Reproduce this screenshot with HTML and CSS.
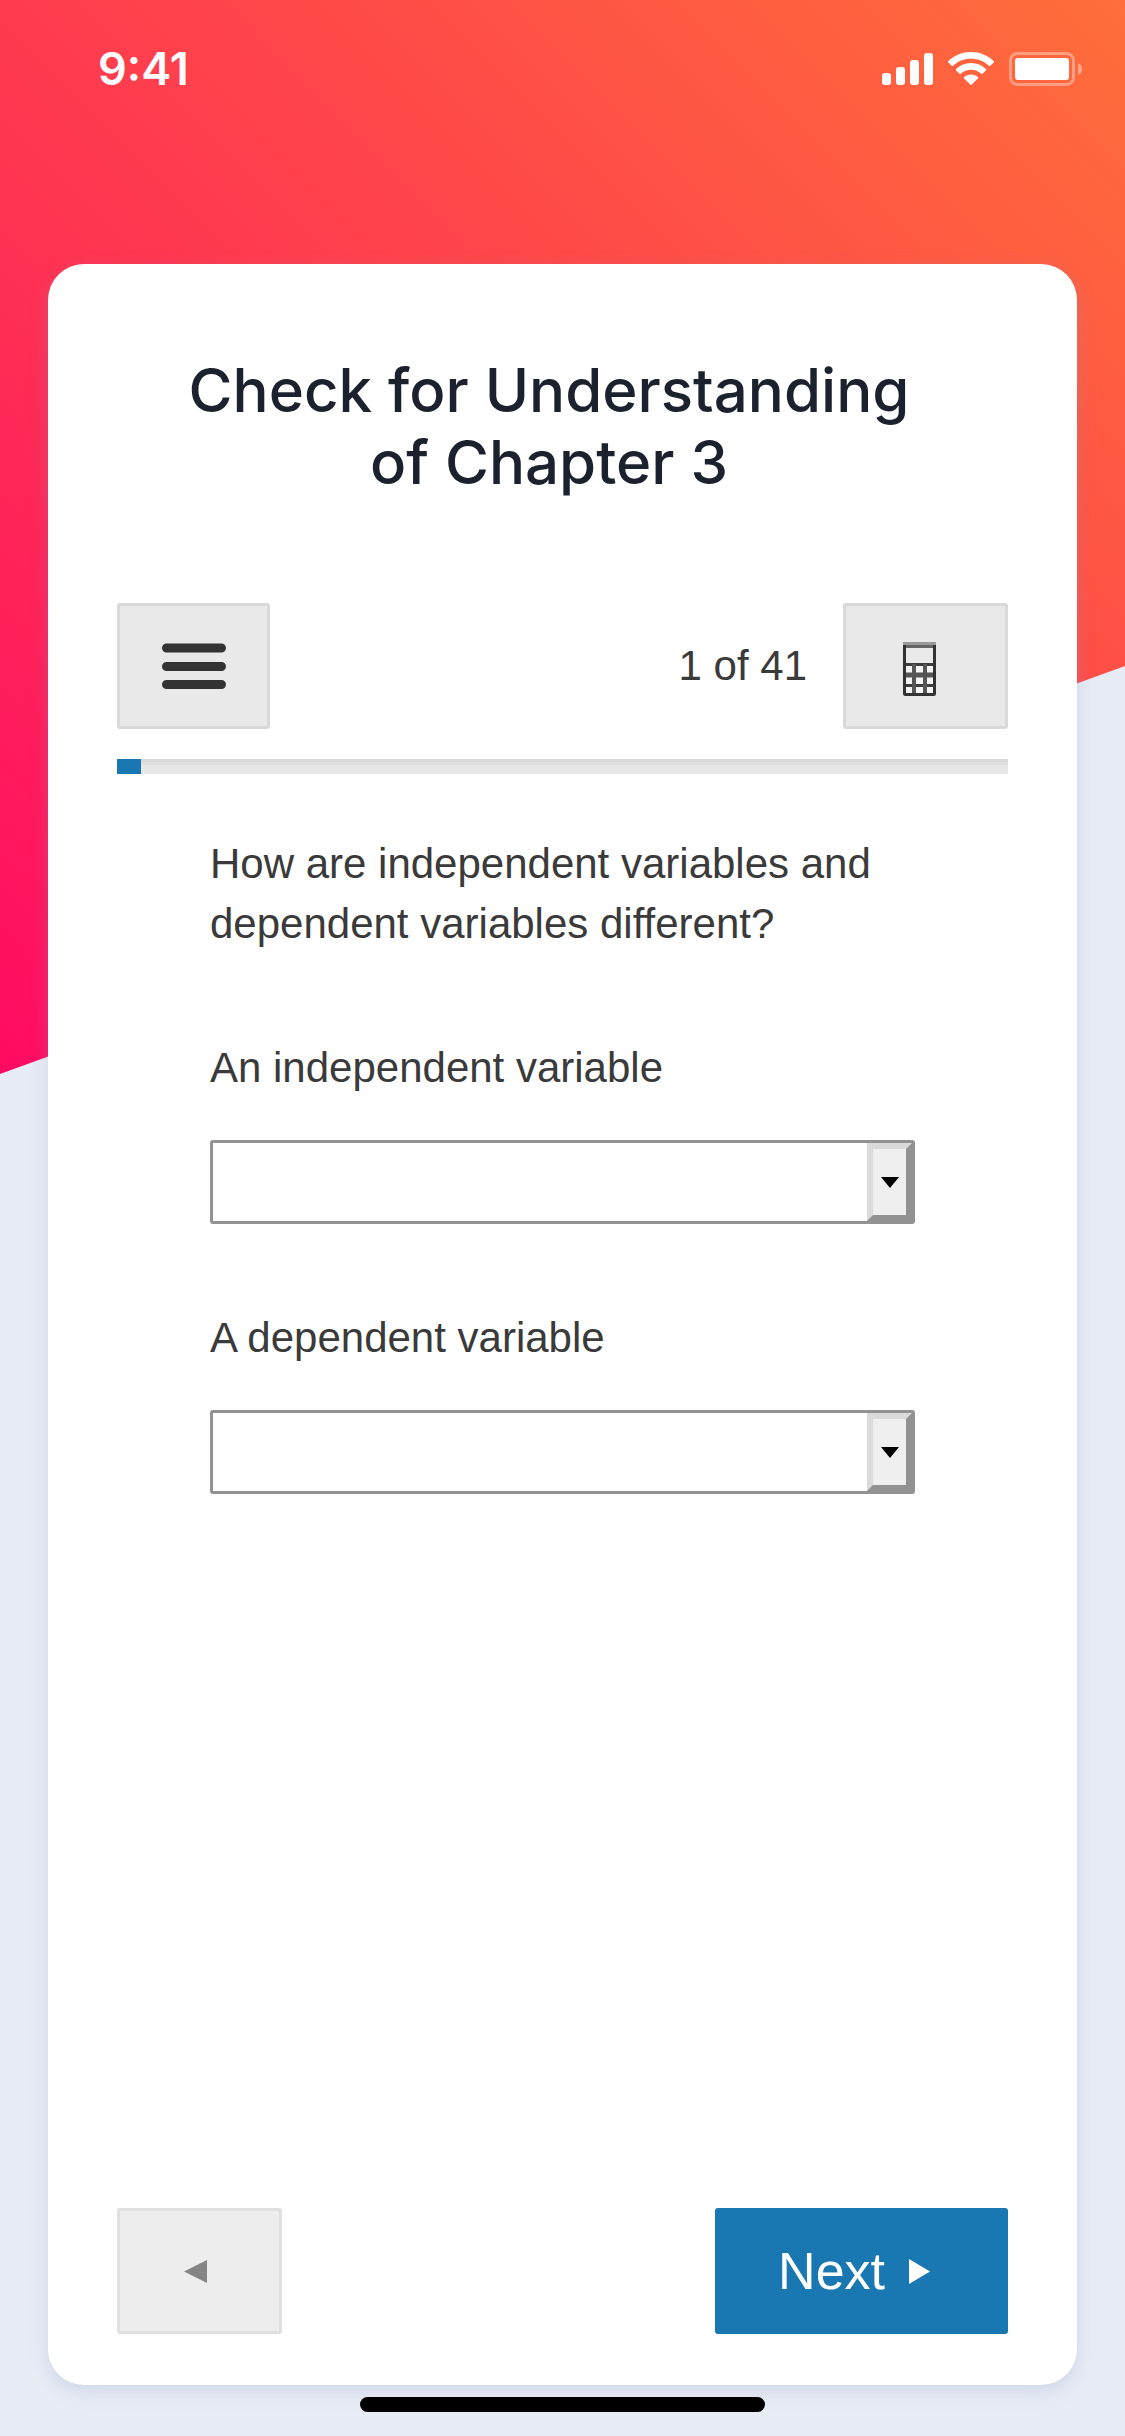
FILE: index.html
```html
<!DOCTYPE html>
<html lang="en">
<head>
    <meta charset="UTF-8">
    <meta name="viewport" content="width=device-width, initial-scale=1.0">
    <title>Check for Understanding</title>
    <link rel="stylesheet" href="styles.css">
</head>
<body>
    <header class="status-bar">
        <span class="time">9:41</span>
        <div class="status-icons">
            <svg width="51" height="34" viewBox="0 0 51 34" fill="#fff">
                <rect x="0" y="21" width="9" height="12" rx="3"/>
                <rect x="14" y="15" width="9" height="18" rx="3"/>
                <rect x="28" y="8" width="9" height="25" rx="3"/>
                <rect x="42" y="1" width="9" height="32" rx="3"/>
            </svg>
            <svg width="46" height="34" viewBox="0 0 46 34" fill="#fff">
                <path d="M23 0C31.800 0 39.800 3.400 45.700 9Q46.300 9.700 45.700 10.400L42.300 13.800Q41.600 14.400 40.900 13.800C36.200 9.400 29.900 6.800 23 6.800S9.800 9.400 5.100 13.800Q4.400 14.400 3.700 13.800L.3 10.400Q-.3 9.700 .3 9C6.200 3.400 14.200 0 23 0Z"/>
                <path d="M23 11C28.800 11 34 13.200 38 16.900Q38.600 17.600 38 18.300L34.500 21.700Q33.900 22.300 33.200 21.700C30.500 19.300 26.900 17.800 23 17.800S15.500 19.300 12.800 21.700Q12.100 22.300 11.500 21.700L8 18.300Q7.400 17.600 8 16.900C12 13.200 17.200 11 23 11Z"/>
                <path d="M23 22.500C25.600 22.500 28 23.400 29.900 25Q30.600 25.700 29.900 26.400L23.700 32.600Q23 33.200 22.300 32.600L16.100 26.400Q15.400 25.700 16.100 25C18 23.400 20.400 22.500 23 22.500Z"/>
            </svg>
            <svg width="73" height="34" viewBox="0 0 73 34" fill="#fff">
                <rect x="1.500" y="1.500" width="63" height="31" rx="7" fill="none" stroke="#fff" stroke-width="3" opacity=".36"/>
                <rect x="6" y="6" width="54" height="22" rx="3"/>
                <path d="M69 11C71.500 12 73 14.300 73 17S71.500 22 69 23Z" opacity=".4"/>
            </svg>
        </div>
    </header>

    <main class="card">
        <h1 class="title">Check for Understanding<br>of Chapter 3</h1>

        <div class="toolbar">
            <button class="btn btn-menu" type="button" aria-label="Menu">
                <svg width="66" height="48" viewBox="0 0 66 48" stroke="#333" stroke-width="9" stroke-linecap="round">
                    <path d="M5.500 6H60.500M5.500 24.500H60.500M5.500 42.500H60.500"/>
                </svg>
            </button>
            <span class="counter">1 of 41</span>
            <button class="btn" type="button" aria-label="Calculator">
                <svg width="45" height="48" viewBox="0 0 45 48" overflow="visible">
                    <rect x="1.500" y="1.500" width="30" height="51" rx="1" fill="#f4f4f4" stroke="#333" stroke-width="3"/>
                    <rect x="0" y="0" width="33" height="3" fill="#999"/>
                    <rect x="3" y="3" width="27" height="3" fill="#666"/>
                    <rect x="3" y="6" width="27" height="15" fill="#eaeaea"/>
                    <path d="M3 22.500H30M3 43.500H30" stroke="#3c3c3c" stroke-width="3"/>
                    <path d="M3 33H30" stroke="#555" stroke-width="5"/>
                    <path d="M11 22V51M22 22V51" stroke="#555" stroke-width="4"/>
                </svg>
            </button>
        </div>

        <div class="progress" role="progressbar" aria-label="Questions" aria-valuenow="1" aria-valuemax="41">
            <div class="progress-fill" style="width: 2.7%"></div>
        </div>

        <form class="question">
            <p class="question-text">How are independent variables and<br>dependent variables different?</p>
            <div class="field">
                <label for="independent">An independent variable</label>
                <div class="select-box">
                    <select id="independent">
                        <option value=""></option>
                    </select>
                    <span class="arrow"></span>
                </div>
            </div>
            <div class="field">
                <label for="dependent">A dependent variable</label>
                <div class="select-box">
                    <select id="dependent">
                        <option value=""></option>
                    </select>
                    <span class="arrow"></span>
                </div>
            </div>
        </form>

        <div class="nav">
            <button class="btn btn-prev" type="button" aria-label="Previous">
                <svg width="33" height="27" viewBox="0 0 33 27">
                    <path d="M1 13.500L24 2V25Z" fill="#858585"/>
                </svg>
            </button>
            <button class="btn btn-next" type="button">
                Next
                <svg width="33" height="27" viewBox="0 0 33 27">
                    <path d="M0 1L21 13.500L0 26Z" fill="#fff"/>
                </svg>
            </button>
        </div>
    </main>

    <div class="home-indicator"></div>
</body>
</html>
```
FILE: styles.css
```css
* {
    margin: 0;
    padding: 0;
    box-sizing: border-box;
}
body {
    position: relative;
    display: flex;
    flex-direction: column;
    min-height: 100vh;
    background-color: #e8ecf5;
    font-family: "Liberation Sans", Arial, sans-serif;
    color: #3a3a3a;
}
/* slanted gradient behind the card */
body::before {
    content: "";
    position: absolute;
    top: 0;
    left: 0;
    right: 0;
    height: 1074px;
    z-index: -1;
    background: linear-gradient(45deg, #ff0b62, #ff6e3a);
    clip-path: polygon(0 0, 100% 0, 100% 62%, 0 100%);
}
svg {
    display: block;
}
.status-bar {
    display: flex;
    justify-content: space-between;
    align-items: flex-start;
    height: 264px;
    padding: 42px 43px 0 98px;
}
.time {
    font-family: Inter, sans-serif;
    font-size: 45px;
    font-weight: 600;
    line-height: 54px;
    color: #fff;
}
.status-icons {
    display: flex;
    gap: 15px;
    padding-top: 10px;
}
.card {
    flex: 1;
    display: flex;
    flex-direction: column;
    margin: 0 48px;
    padding: 90px 69px 51px;
    background-color: #fff;
    border-radius: 36px;
    box-shadow: 0 6px 18px rgba(130, 150, 200, 0.25);
}
.title {
    margin-bottom: 105px;
    padding-right: 27px;
    font-family: Inter, sans-serif;
    font-size: 60px;
    font-weight: 500;
    line-height: 72px;
    text-align: center;
    color: #1b212d;
}
.toolbar {
    display: flex;
    align-items: center;
    margin-bottom: 30px;
}
.btn {
    display: flex;
    justify-content: center;
    align-items: center;
    width: 165px;
    height: 126px;
    background-color: #e9e9e9;
    border: 3px solid #d9d9d9;
    border-radius: 3px;
    font-family: inherit;
    cursor: pointer;
}
.btn-menu {
    width: 153px;
}
.counter {
    margin-left: auto;
    margin-right: 36px;
    font-size: 42px;
    line-height: 60px;
}
.progress {
    height: 15px;
    margin-bottom: 60px;
    background: linear-gradient(#d9d9d9 3px, #e0e0e0 3px, #e0e0e0 6px, #e7e7e7 6px);
}
.progress-fill {
    height: 100%;
    background-color: #1977b2;
}
.question {
    display: flex;
    flex-direction: column;
    gap: 84px;
    padding: 0 93px;
    font-size: 42px;
    line-height: 60px;
}
.question-text {
    white-space: nowrap;
}
.field {
    display: flex;
    flex-direction: column;
    gap: 42px;
}
.select-box {
    position: relative;
}
.select-box select {
    display: block;
    width: 100%;
    height: 84px;
    padding: 0 60px 0 12px;
    appearance: none;
    background-color: #fff;
    border: 3px solid #929292;
    border-radius: 3px;
    font: inherit;
    color: inherit;
}
.arrow {
    position: absolute;
    top: 3px;
    right: 3px;
    bottom: 3px;
    display: flex;
    justify-content: center;
    align-items: center;
    width: 45px;
    background-color: #efefef;
    border: 6px solid;
    border-color: #dadada #929292 #929292 #dadada;
    pointer-events: none;
}
.arrow::before {
    content: "";
    border: 9px solid transparent;
    border-top: 11px solid #000;
    border-bottom: 0;
}
.nav {
    display: flex;
    justify-content: space-between;
    margin-top: auto;
}
.btn-prev {
    background-color: #ededed;
    border-color: #e0e0e0;
}
.btn-next {
    gap: 24px;
    width: auto;
    padding: 0 63px 0 60px;
    background-color: #1977b2;
    border-color: #1977b2;
    font-size: 52px;
    color: #fff;
}
.home-indicator {
    width: 36%;
    height: 15px;
    margin: 12px auto 24px;
    background-color: #000;
    border-radius: 8px;
}
```
